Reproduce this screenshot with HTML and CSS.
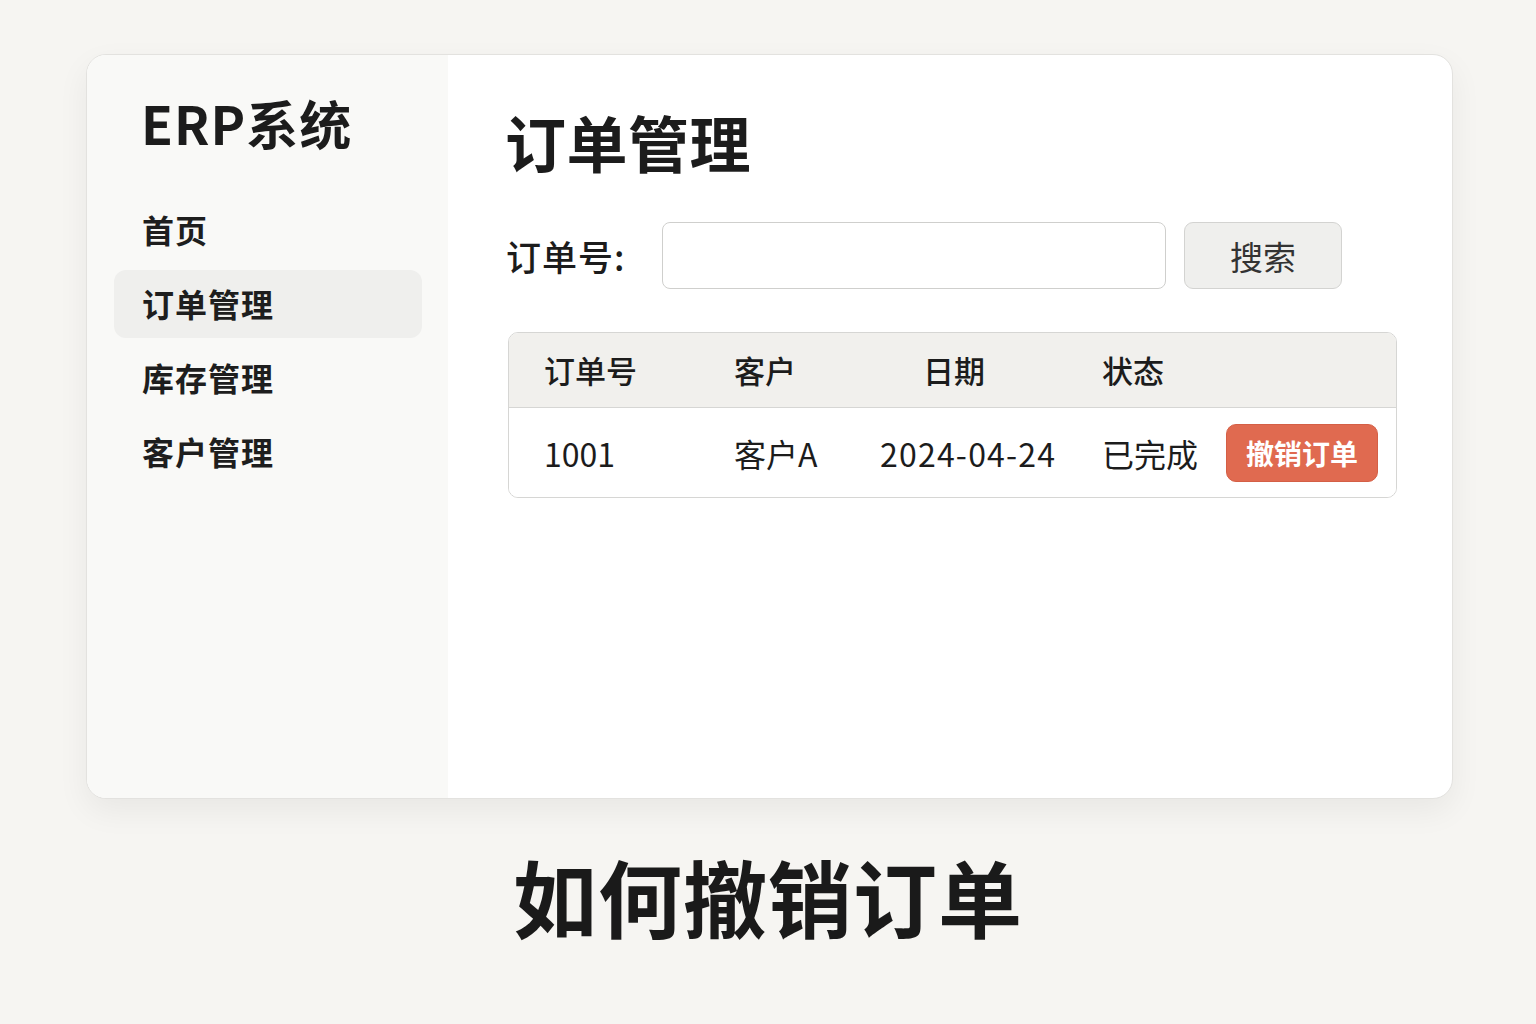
FILE: index.html
```html
<!DOCTYPE html>
<html lang="zh-CN">
<head>
<meta charset="utf-8">
<title>ERP系统 - 订单管理</title>
<link rel="stylesheet" href="styles.css">
</head>
<body>
<div class="page">
  <div class="card">
    <aside class="sidebar">
      <div class="logo">ERP系统</div>
      <nav class="nav">
        <div class="nav-item">首页</div>
        <div class="nav-item active">订单管理</div>
        <div class="nav-item">库存管理</div>
        <div class="nav-item">客户管理</div>
      </nav>
    </aside>
    <main class="main">
      <h1 class="title">订单管理</h1>
      <div class="search">
        <span class="search-label">订单号:</span>
        <div class="search-input"></div>
        <div class="search-btn">搜索</div>
      </div>
      <div class="table">
        <div class="row head">
          <div class="cell c1">订单号</div>
          <div class="cell c2">客户</div>
          <div class="cell c3 date-head">日期</div>
          <div class="cell c4">状态</div>
          <div class="cell c5"></div>
        </div>
        <div class="row body">
          <div class="cell c1">1001</div>
          <div class="cell c2">客户A</div>
          <div class="cell c3 date">2024-04-24</div>
          <div class="cell c4">已完成</div>
          <div class="cell c5"><span class="cancel-btn">撤销订单</span></div>
        </div>
      </div>
    </main>
  </div>
  <div class="caption">如何撤销订单</div>
</div>
</body>
</html>
```

FILE: styles.css
```css
* { box-sizing: border-box; }
html, body { margin: 0; padding: 0; }
body {
  background: #f6f5f2;
  font-family: "Noto Sans CJK SC", "Noto Sans", sans-serif;
  color: #1c1c1c;
  width: 1536px;
  height: 1024px;
  overflow: hidden;
}
.page {
  padding: 54px 0 0 86px;
}
.card {
  width: 1367px;
  height: 745px;
  background: #ffffff;
  border: 1px solid #e3e2df;
  border-radius: 20px;
  box-shadow: 0 12px 32px rgba(0,0,0,0.06);
  display: flex;
  overflow: hidden;
}
.sidebar {
  width: 361px;
  flex: none;
  background: #f9f9f7;
  padding: 38px 0 0 27px;
}
.logo {
  font-size: 52px;
  font-weight: 700;
  line-height: 60px;
  margin-left: 27px;
  letter-spacing: 1px;
}
.nav {
  margin-top: 43px;
  display: flex;
  flex-direction: column;
  gap: 6px;
}
.nav-item {
  width: 308px;
  height: 68px;
  padding-left: 28px;
  padding-bottom: 3px;
  display: flex;
  align-items: center;
  font-size: 32px;
  font-weight: 700;
  letter-spacing: 1px;
  border-radius: 12px;
  color: #1e1e1e;
}
.nav-item.active {
  background: #efefed;
}
.main {
  flex: 1;
  padding: 51px 0 0 60px;
}
.title {
  margin: 0 0 0 -3px;
  font-size: 61px;
  font-weight: 700;
  line-height: 72px;
  letter-spacing: 0.5px;
}
.search {
  margin-top: 44px;
  display: flex;
  align-items: center;
  height: 67px;
}
.search-label {
  font-size: 35px;
  font-weight: 500;
  width: 156px;
  margin-left: -2px;
  letter-spacing: 1px;
}
.search-input {
  width: 504px;
  height: 67px;
  border: 1.5px solid #cfcfcd;
  border-radius: 8px;
  background: #fff;
}
.search-btn {
  margin-left: 18px;
  width: 158px;
  height: 67px;
  border: 1.5px solid #d3d3d1;
  border-radius: 9px;
  background: #efefed;
  display: flex;
  align-items: center;
  justify-content: center;
  font-size: 33px;
  color: #333;
}
.table {
  margin-top: 43px;
  width: 889px;
  border: 1.5px solid #d6d6d4;
  border-radius: 10px;
  overflow: hidden;
}
.row {
  display: grid;
  grid-template-columns: 225px 146px 222px 124px 1fr;
  align-items: center;
}
.row.head {
  height: 75px;
  background: #f1f0ed;
  border-bottom: 1.5px solid #d6d6d4;
  font-size: 31px;
  font-weight: 500;
  padding-bottom: 2px;
}
.row.body {
  height: 89px;
  background: #fff;
  font-size: 32px;
}
.cell.c1 { padding-left: 35px; }
.date-head { padding-left: 43px; }
.date { letter-spacing: 1.2px; }
.cancel-btn {
  display: inline-flex;
  align-items: center;
  justify-content: center;
  width: 152px;
  height: 58px;
  background: #e06a50;
  border: 1px solid #d45f46;
  border-radius: 10px;
  color: #fff;
  font-size: 28px;
  font-weight: 700;
}
.caption {
  margin-top: 47px;
  width: 1364px;
  text-align: center;
  font-size: 84px;
  font-weight: 700;
  line-height: 100px;
  letter-spacing: 1px;
  color: #1a1a1a;
}
```
